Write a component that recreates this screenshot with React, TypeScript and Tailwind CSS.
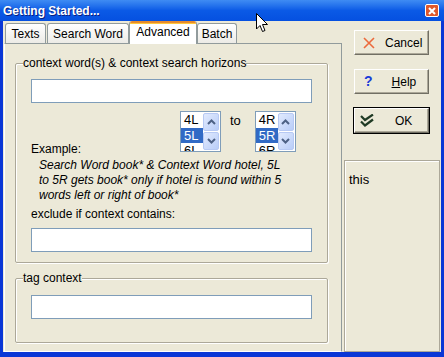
import React from "react";

function Chevron({ up }: { up?: boolean }) {
  return (
    <svg width="9" height="6" viewBox="0 0 9 6">
      <polyline
        points={up ? "1,5 4.5,1.5 8,5" : "1,1 4.5,4.5 8,1"}
        fill="none"
        stroke="#4d6185"
        strokeWidth="2"
      />
    </svg>
  );
}

function ScrollBtn({ up }: { up?: boolean }) {
  return (
    <div className="flex flex-1 items-center justify-center rounded-[2px] border border-[#b7c9f4] bg-gradient-to-br from-[#e1eafe] to-[#b9cdf8]">
      <Chevron up={up} />
    </div>
  );
}

function SpinList({ items, sel }: { items: string[]; sel: number }) {
  return (
    <div className="flex h-[41px] w-[41px] overflow-hidden border border-[#7f9db9] bg-white">
      <div className="flex-1 overflow-hidden text-[13px]">
        {items.map((t, i) => (
          <div
            key={t}
            className={
              i === sel
                ? "h-[15px] bg-[#316ac5] pl-[3px] leading-[15px] text-white"
                : "h-[16px] pl-[3px] leading-[16px]"
            }
          >
            {t}
          </div>
        ))}
      </div>
      <div className="flex w-[17px] flex-col gap-[1px] py-[1px] pr-[1px]">
        <ScrollBtn up />
        <ScrollBtn />
      </div>
    </div>
  );
}

function Tab({ label, active, w }: { label: string; active?: boolean; w: string }) {
  if (active) {
    return (
      <div
        className={`relative z-10 mb-[-1px] flex h-[23px] flex-col overflow-hidden rounded-t-[3px] border-x border-[#919b9c] bg-white ${w}`}
      >
        <div className="h-[2px] bg-[#e68b2c]" />
        <div className="h-[1px] bg-[#ffc73c]" />
        <div className="pt-[1px] text-center leading-[14px]">{label}</div>
      </div>
    );
  }
  return (
    <div
      className={`flex h-[20px] items-start justify-center rounded-t-[3px] border-x border-t border-[#919b9c] bg-gradient-to-b from-white to-[#ecebe6] pt-[3px] leading-[14px] ${w}`}
    >
      {label}
    </div>
  );
}

function Btn({ children, def }: { children: React.ReactNode; def?: boolean }) {
  return (
    <div className={def ? "border border-black" : "border border-transparent"}>
      <div className="flex h-[25px] w-[75px] items-center border border-t-white border-l-white border-b-[#716f64] border-r-[#716f64] bg-[#ece9d8] shadow-[inset_-1px_-1px_0_#aca899]">
        {children}
      </div>
    </div>
  );
}

export default function App() {
  return (
    <div className="relative flex h-[357px] w-[444px] flex-col overflow-hidden bg-[#0a37d6] font-['Liberation_Sans',Arial,sans-serif] text-[12px] text-black">
      {/* title bar */}
      <div className="flex h-[21px] items-center justify-between bg-gradient-to-b from-[#3f8cf3] via-[#0b5ae6] to-[#0550e0] pl-[3px] pr-[5px]">
        <span className="text-[12px] font-bold text-white [text-shadow:1px_1px_0_#0a1e80]">
          Getting Started...
        </span>
        <div className="flex h-[13px] w-[14px] items-center justify-center rounded-[2px] border border-white bg-[#e0582c]">
          <svg width="8" height="8" viewBox="0 0 8 8">
            <path d="M1 1 L7 7 M7 1 L1 7" stroke="white" strokeWidth="2" />
          </svg>
        </div>
      </div>

      {/* body */}
      <div className="mx-[3px] mb-[5px] flex flex-1 bg-[#ece9d8]">
        {/* left: tabs + panel */}
        <div className="flex w-[339px] flex-col">
          <div className="flex h-[22px] items-end pl-[2px]">
            <Tab label="Texts" w="w-[41px] mr-[1px]" />
            <Tab label="Search Word" w="w-[82px]" />
            <Tab label="Advanced" active w="w-[68px]" />
            <Tab label="Batch" w="w-[40px]" />
          </div>
          <div className="ml-[1px] flex-1 border-t border-r border-b border-l border-t-[#919b9c] border-r-[#919b9c] border-b-white border-l-white pl-[10px] pr-[13px] pt-[12px]">
            <fieldset className="rounded-[2px] border border-[#aca899] px-[15px] pb-[10px] pt-[9px] shadow-[1px_1px_0_#fff,inset_1px_1px_0_#fff]">
              <legend className="ml-[-8px] bg-[#ece9d8] leading-[14px]">
                context word(s) &amp; context search horizons
              </legend>
              <div className="h-[24px] border border-[#7f9db9] bg-white" />
              <div className="mt-[8px] flex h-[46px] items-start">
                <div className="w-[149px] self-end leading-[15px]">Example:</div>
                <SpinList items={["4L", "5L", "6L"]} sel={1} />
                <div className="ml-[9px] mr-[14px] pt-[3px] text-[13px] leading-[14px]">to</div>
                <SpinList items={["4R", "5R", "6R"]} sel={1} />
              </div>
              <div className="mt-[1px] pl-[8px] italic leading-[15px]">
                Search Word book* &amp; Context Word hotel, 5L
                <br />
                to 5R gets book* only if hotel is found within 5
                <br />
                words left or right of book*
              </div>
              <div className="mt-[4px] leading-[15px]">exclude if context contains:</div>
              <div className="mt-[6px] h-[24px] border border-[#7f9db9] bg-white" />
            </fieldset>

            <fieldset className="mt-[8px] rounded-[2px] border border-[#aca899] px-[15px] pb-[23px] pt-[10px] shadow-[1px_1px_0_#fff,inset_1px_1px_0_#fff]">
              <legend className="ml-[-8px] bg-[#ece9d8] leading-[14px]">tag context</legend>
              <div className="h-[24px] border border-[#7f9db9] bg-white" />
            </fieldset>
          </div>
        </div>

        {/* right: buttons + panel */}
        <div className="flex flex-1 flex-col">
          <div className="flex flex-col items-start gap-[12px] pl-[11px] pt-[8px]">
            <Btn>
              <svg className="ml-[8px]" width="12" height="12" viewBox="0 0 12 12">
                <path d="M1 1 L11 11 M11 1 L1 11" stroke="#ec6a3c" strokeWidth="1.6" />
              </svg>
              <span className="ml-[10px]">Cancel</span>
            </Btn>
            <Btn>
              <span className="ml-[9px] text-[14px] font-bold text-[#1a3cd8]">?</span>
              <span className="ml-[19px]">
                <span className="underline">H</span>elp
              </span>
            </Btn>
            <Btn def>
              <svg className="ml-[5px]" width="15" height="14" viewBox="0 0 15 14">
                <path
                  d="M1 2 L5 6 L13 0.5 M1 7.5 L5 11.5 L13 5.5"
                  fill="none"
                  stroke="#1f3a24"
                  strokeWidth="2.2"
                />
              </svg>
              <span className="ml-[20px]">OK</span>
            </Btn>
          </div>
          <div className="ml-[2px] mr-[1px] mt-[26px] flex-1 border border-[#aca899] px-[4px] pt-[11px] shadow-[inset_1px_1px_0_#fff]">
            <div className="text-[13px] leading-[15px]">this</div>
          </div>
        </div>
      </div>

      {/* mouse pointer */}
      <svg
        className="absolute left-[256px] top-[13px]"
        width="13"
        height="20"
        viewBox="0 0 13 20"
      >
        <path
          d="M0.5 0.5 L0.5 16 L4 12.5 L6.5 18.5 L9 17.5 L6.5 11.5 L11.5 11.5 Z"
          fill="white"
          stroke="black"
          strokeWidth="1"
        />
      </svg>
    </div>
  );
}
